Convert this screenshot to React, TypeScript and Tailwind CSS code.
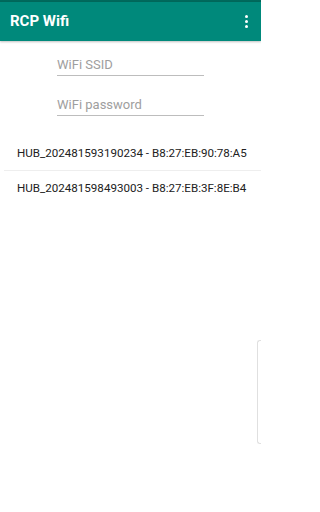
import { useState } from 'react'

const HUBS = [
  'HUB_202481593190234 - B8:27:EB:90:78:A5',
  'HUB_202481598493003 - B8:27:EB:3F:8E:B4',
]

function App() {
  const [ssid, setSsid] = useState('')
  const [password, setPassword] = useState('')

  return (
    <div className="relative h-[512px] w-[261px] overflow-hidden bg-white font-['Roboto',sans-serif]">
      {/* Status bar strip + app bar */}
      <div className="h-[2px] bg-[#00695c]" />
      <div className="flex h-[39px] items-center justify-between bg-[#00897b] pl-[10px] pr-[13px] shadow-[0_1px_2px_rgba(0,0,0,0.25)]">
        <h1 className="text-[15px] font-bold text-white">RCP Wifi</h1>
        <div className="flex flex-col gap-[2px]">
          <span className="h-[3px] w-[3px] rounded-full bg-white" />
          <span className="h-[3px] w-[3px] rounded-full bg-white" />
          <span className="h-[3px] w-[3px] rounded-full bg-white" />
        </div>
      </div>

      {/* Inputs */}
      <div className="flex flex-col items-center pt-[16px]">
        <input
          value={ssid}
          onChange={e => setSsid(e.target.value)}
          placeholder="WiFi SSID"
          className="w-[147px] border-b border-[#bdbdbd] bg-transparent pb-[2px] text-[13px] leading-[16px] text-gray-800 placeholder-[#9e9e9e] outline-none"
        />
        <input
          type="password"
          value={password}
          onChange={e => setPassword(e.target.value)}
          placeholder="WiFi password"
          className="mt-[21px] w-[147px] border-b border-[#bdbdbd] bg-transparent pb-[2px] text-[13px] leading-[16px] text-gray-800 placeholder-[#9e9e9e] outline-none"
        />
      </div>

      {/* Hub list */}
      <div className="mt-[20px]">
        {HUBS.map((h, i) => (
          <div key={h}>
            {i > 0 && <div className="ml-[4px] h-px bg-[#eeeeee]" />}
            <div className="py-[10px] pl-[17px] text-[11.6px] leading-[14px] text-[#212121]">{h}</div>
          </div>
        ))}
      </div>

      {/* Edge panel handle */}
      <div className="absolute right-0 top-[340px] h-[104px] w-[4px] rounded-l-[3px] border border-r-0 border-[#e0e0e0]" />
    </div>
  )
}

export default App
